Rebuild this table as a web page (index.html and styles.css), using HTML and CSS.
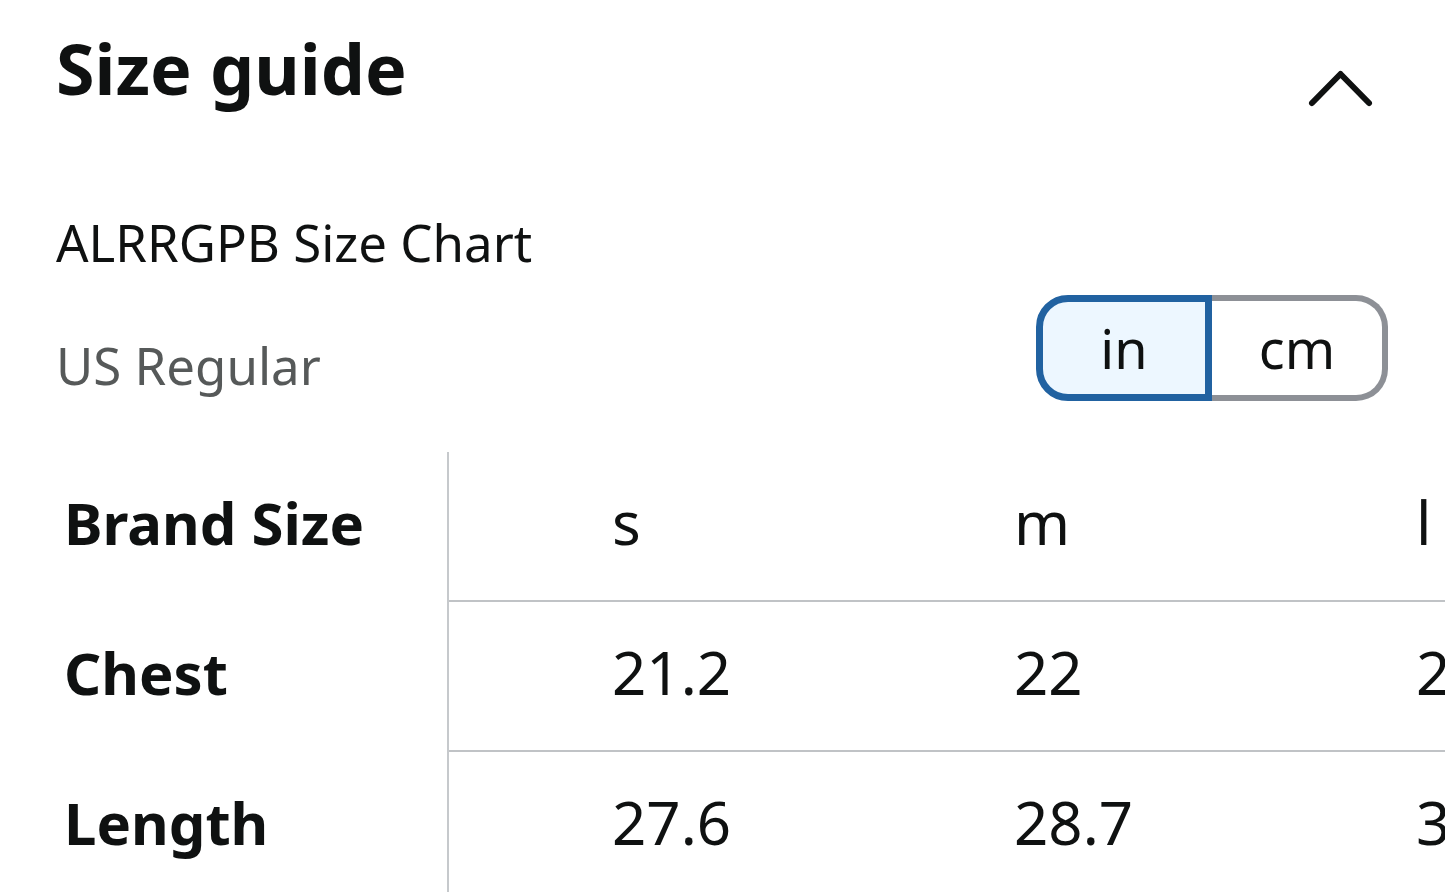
FILE: index.html
```html
<!DOCTYPE html>
<html lang="en">
<head>
<meta charset="utf-8">
<title>Size guide</title>
<link rel="stylesheet" href="styles.css">
</head>
<body>
<div class="page">
  <header class="header">
    <h1 class="title">Size guide</h1>
    <svg class="chevron" width="70" height="40" viewBox="0 0 70 40" aria-hidden="true">
      <path d="M6 35 L34.5 6 L63 35" fill="none" stroke="#0f1111" stroke-width="6" stroke-linecap="round" stroke-linejoin="round"/>
    </svg>
  </header>

  <div class="chart-name">ALRRGPB Size Chart</div>

  <div class="sub-row">
    <div class="region">US Regular</div>
    <div class="toggle">
      <div class="seg seg-active">in</div>
      <div class="seg seg-idle">cm</div>
    </div>
  </div>

  <div class="table">
    <div class="label">Brand Size</div>
    <div class="val">s</div>
    <div class="val">m</div>
    <div class="val">l</div>
    <div class="val">xl</div>

    <div class="label">Chest</div>
    <div class="val">21.2</div>
    <div class="val">22</div>
    <div class="val">23</div>
    <div class="val">24</div>

    <div class="label">Length</div>
    <div class="val">27.6</div>
    <div class="val">28.7</div>
    <div class="val">30</div>
    <div class="val">31</div>
  </div>
</div>
</body>
</html>
```

FILE: styles.css
```css
html, body {
  margin: 0;
  padding: 0;
  background: #ffffff;
  overflow: hidden;
}

body {
  font-family: "Noto Sans", "Open Sans", sans-serif;
  color: #0f1111;
  width: 1445px;
  height: 892px;
}

.page {
  padding: 0 57px 0 56px;
}

.header {
  display: flex;
  justify-content: space-between;
  align-items: flex-start;
  height: 70px;
  padding-top: 33px;
}

.title {
  margin: 0;
  font-size: 70px;
  font-weight: 700;
  line-height: 70px;
}

.chevron {
  display: block;
  flex: none;
  margin-top: 35px;
  margin-right: 12px;
}

.chart-name {
  margin-top: 109px;
  font-size: 51px;
  line-height: 60px;
}

.sub-row {
  display: flex;
  justify-content: space-between;
  align-items: flex-start;
  margin-top: 23px;
}

.region {
  margin-top: 40px;
  font-size: 51px;
  line-height: 60px;
  color: #565959;
}

.toggle {
  display: flex;
  height: 106px;
}

.seg {
  box-sizing: border-box;
  width: 176px;
  height: 106px;
  display: flex;
  align-items: center;
  justify-content: center;
  font-size: 54px;
  line-height: 94px;
}

.seg-active {
  background: #edf7ff;
  border: 7px solid #2162a1;
  border-radius: 32px 0 0 32px;
}

.seg-idle {
  background: #ffffff;
  border: 6px solid #8d9096;
  border-left: none;
  border-radius: 0 32px 32px 0;
}

.table {
  display: grid;
  grid-template-columns: 393px repeat(4, 402px);
  margin-top: 51px;
}

.label {
  box-sizing: border-box;
  height: 150px;
  padding: 0 0 8px 8px;
  border-right: 2px solid #c6c9cc;
  font-size: 58px;
  font-weight: 700;
  line-height: 142px;
}

.val {
  box-sizing: border-box;
  height: 150px;
  padding: 0 0 8px 163px;
  border-bottom: 2px solid #c0c3c6;
  font-size: 60px;
  line-height: 140px;
  white-space: nowrap;
}
```
